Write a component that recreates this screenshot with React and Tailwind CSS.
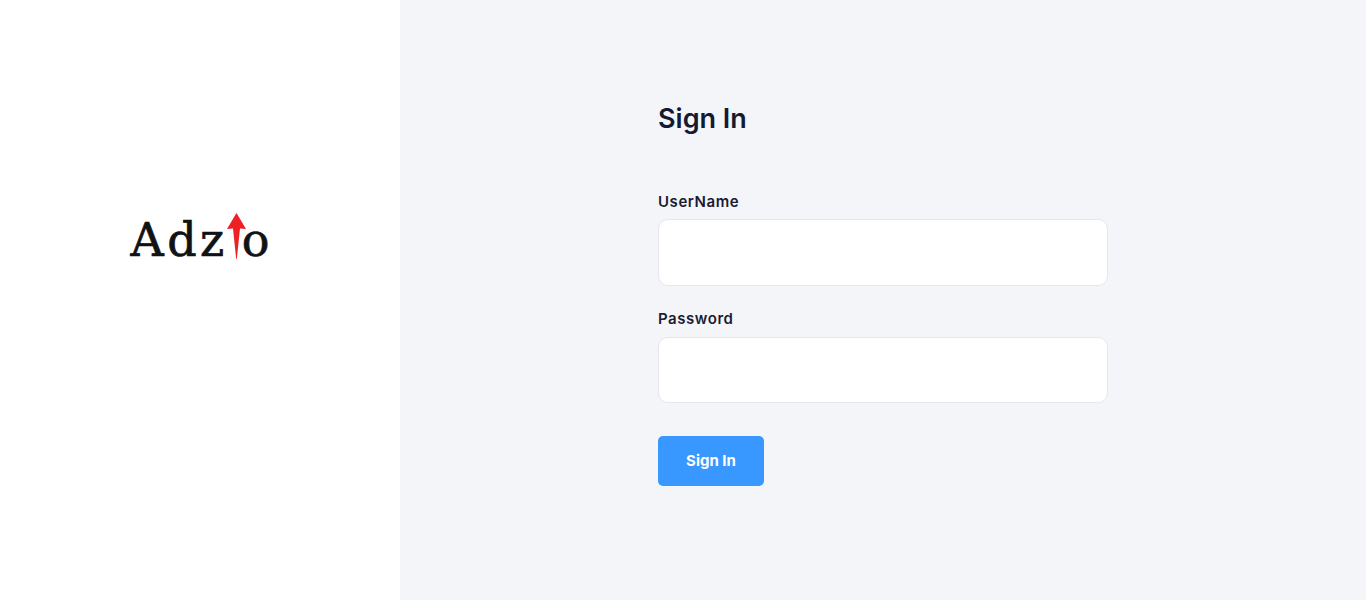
function Logo() {
  return (
    <div className="flex h-[48px] items-end">
      <span className="text-[46px] leading-[48px] tracking-[3.5px] text-[#111214] font-['DejaVu_Serif'] [-webkit-text-stroke:0.7px_#111214]">Adz</span>
      <svg width="19" height="46" viewBox="0 0 19 46" className="-ml-[1px] mb-[5px]">
        <path d="M9.5 0 L19 16 L13 15.5 L9.8 46 L9.2 46 L6 15.5 L0 16 Z" fill="#ed2024" />
      </svg>
      <span className="-ml-[4px] text-[46px] leading-[48px] text-[#111214] font-['DejaVu_Serif'] [-webkit-text-stroke:0.7px_#111214]">o</span>
    </div>
  );
}

function Field({ label, inputClass }) {
  return (
    <div className="flex flex-col">
      <label className="text-[15px] leading-[22px] font-semibold tracking-[0.55px] text-[#1a1b34]">{label}</label>
      <input className={`w-[450px] rounded-[10px] border border-[#e5e7ed] bg-white px-4 outline-none ${inputClass}`} />
    </div>
  );
}

export default function App() {
  return (
    <div className="flex h-[600px] w-full font-['Inter']">
      <aside className="flex w-[400px] shrink-0 items-center justify-center bg-white pb-[120px]">
        <Logo />
      </aside>
      <main className="flex-1 bg-[#f4f5f9] pl-[258px] pt-[100px]">
        <h1 className="text-[27px] leading-[38px] font-semibold text-[#141a33]">Sign In</h1>
        <div className="mt-[53px] flex flex-col">
          <div className="mb-[22px] [&_label]:mb-[6px]">
            <Field label="UserName" inputClass="h-[67px]" />
          </div>
          <div className="[&_label]:mb-[7px]">
            <Field label="Password" inputClass="h-[66px]" />
          </div>
        </div>
        <button className="mt-[33px] h-[50px] w-[106px] rounded-[5px] bg-[#3898ff] text-[15px] font-bold text-white">Sign In</button>
      </main>
    </div>
  );
}
